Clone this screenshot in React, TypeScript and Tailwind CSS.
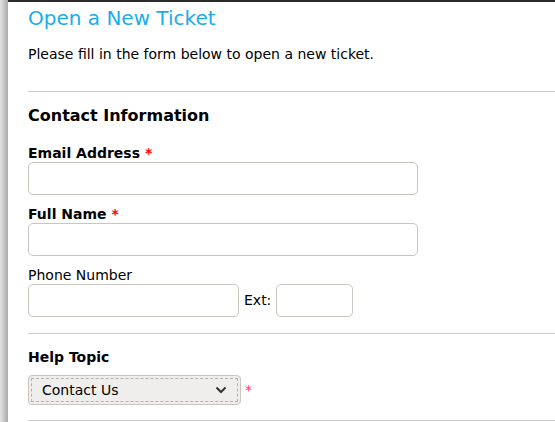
export default function App() {
  return (
    <div className="flex h-[422px] w-[555px] overflow-hidden bg-white font-['DejaVu_Sans',sans-serif] text-[#000]">
      <div className="w-[8px] shrink-0 bg-gradient-to-r from-[#e4e4e4] to-[#a9a9a9]" />
      <main className="flex-1 border-t-2 border-[#2b2b2b] pl-[20px]">
        <h1 className="mt-[4px] text-[20px] leading-[24px] text-[#1aadea]">Open a New Ticket</h1>
        <p className="mt-[16px] text-[14px] leading-[17px]">Please fill in the form below to open a new ticket.</p>
        <hr className="mt-[28px] border-[#cccccc]" />
        <h2 className="mt-[13px] text-[16px] font-bold leading-[22px]">Contact Information</h2>

        <label className="mt-[18px] block text-[14px] font-bold leading-[17px]">
          Email Address <span className="text-[#ff0000]">*</span>
        </label>
        <input className="block h-[33px] w-[390px] rounded-[5px] border border-[#c9c5c0]" />

        <label className="mt-[11px] block text-[14px] font-bold leading-[17px]">
          Full Name <span className="text-[#ff0000]">*</span>
        </label>
        <input className="block h-[33px] w-[390px] rounded-[5px] border border-[#c9c5c0]" />

        <label className="mt-[11px] block text-[14px] leading-[17px]">Phone Number</label>
        <div className="flex items-center">
          <input className="h-[33px] w-[211px] rounded-[5px] border border-[#c9c5c0]" />
          <span className="ml-[5px] text-[14px]">Ext:</span>
          <input className="ml-[5px] h-[33px] w-[77px] rounded-[5px] border border-[#c9c5c0]" />
        </div>

        <hr className="mt-[16px] border-[#cccccc]" />
        <div className="mt-[15px] text-[14px] font-bold leading-[17px]">Help Topic</div>
        <div className="mt-[9px] flex items-center">
          <div className="flex h-[30px] w-[213px] items-center rounded-[4px] border border-[#c9c5c0] bg-[#efeeed] p-[2px]">
            <div className="flex h-full w-full items-center justify-between border border-dashed border-[#b5b3b0] pl-[10px] pr-[10px] text-[14px]">
              <span>Contact Us</span>
              <svg width="12" height="8" viewBox="0 0 12 8" fill="none" stroke="#333" strokeWidth="2">
                <path d="M1.5 1.5 L6 6 L10.5 1.5" />
              </svg>
            </div>
          </div>
          <span className="ml-[4px] text-[14px] text-[#ff3366]">*</span>
        </div>
        <hr className="mt-[15px] border-[#cccccc]" />
      </main>
    </div>
  );
}
